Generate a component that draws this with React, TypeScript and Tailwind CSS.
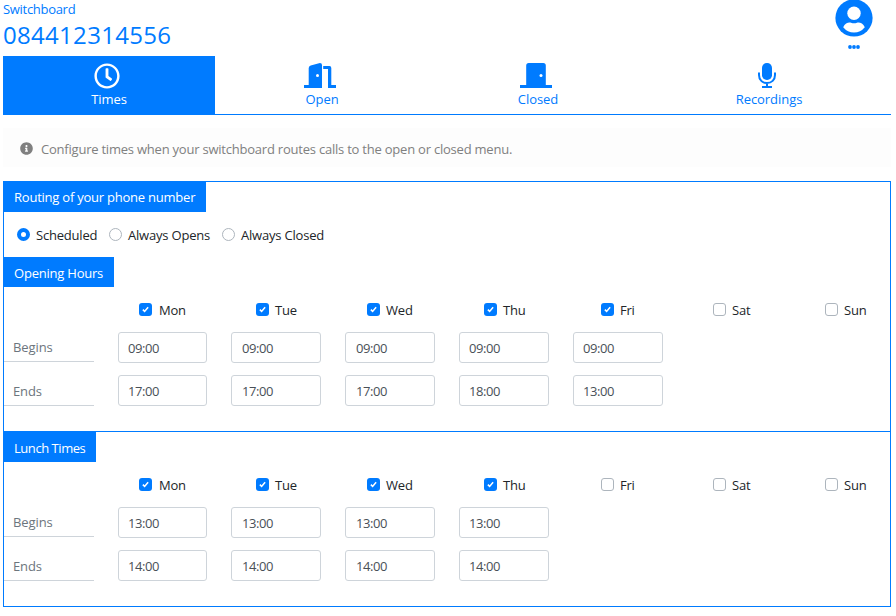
import type { ReactNode } from "react";
import { FaInfoCircle, FaRegClock } from "react-icons/fa";

function DoorOpenIcon() {
  return (
    <svg width="32" height="25" viewBox="0 0 32 25" fill="currentColor">
      <path d="M0 22h4.700V5Q4.700 3 6.700 2.400L15 .2Q18 -.3 18 2V25H0Z" />
      <path d="M19.200 3H25.500q1.800 0 1.800 2v17H32v3h-8V6h-4.800Z" />
      <circle cx="13.500" cy="12.500" r="1.500" fill="#fff" />
    </svg>
  );
}

function DoorClosedIcon() {
  return (
    <svg width="32" height="25" viewBox="0 0 32 25" fill="currentColor">
      <path d="M0 22h6.200V2.500Q6.200 0 8.700 0h14.600q2.500 0 2.500 2.500v19.500H32v3H0Z" />
      <circle cx="21" cy="12.500" r="1.500" fill="#fff" />
    </svg>
  );
}

function UserIcon() {
  return (
    <svg width="38" height="38" viewBox="0 0 38 38">
      <circle cx="19" cy="18" r="18.600" fill="#007bff" />
      <circle cx="19" cy="13.200" r="6.700" fill="#fff" />
      <path d="M8.200 27.200C10 23 14 22 16 22.800Q19 23.800 22 22.800C24 22 28 23 29.800 27.200Q25.500 32.500 19 32.500T8.200 27.200Z" fill="#fff" />
    </svg>
  );
}

function MicIcon() {
  return (
    <svg width="18" height="25" viewBox="0 0 18 25">
      <rect x="4" y="0" width="10" height="17" rx="4.800" fill="currentColor" />
      <path d="M1 9.500V12C1 17 4.500 20 9 20S17 17 17 12V9.500M9 20V24M4 24H14" fill="none" stroke="currentColor" strokeWidth="2" />
    </svg>
  );
}

function Tab({ width, icon, active, children }: { width: string; icon: ReactNode; active?: boolean; children: ReactNode }) {
  return (
    <button className={`${width} ${active ? "bg-[#007bff] text-white" : "text-[#007bff]"} flex h-[58px] flex-col items-center pt-[7px]`}>
      <span className="mr-1 flex h-[25px] items-center">{icon}</span>
      <span className="mt-[2px] leading-[18px] tracking-[-0.05px]">{children}</span>
    </button>
  );
}

function Heading({ className, children }: { className: string; children: ReactNode }) {
  return <h2 className={`${className} h-[30px] whitespace-nowrap bg-[#007bff] pl-[10px] text-white`}>{children}</h2>;
}

function Radio({ label, checked, width }: { label: string; checked?: boolean; width: string }) {
  return (
    <label className={`flex items-center ${width}`}>
      <span className={`-mt-px size-[13px] shrink-0 rounded-full ${checked ? "border-4 border-[#007bff]" : "border border-[#adb5bd]"}`} />
      <span className="ml-[6px] whitespace-nowrap leading-[18px] tracking-[-0.2px]">{label}</span>
    </label>
  );
}

const days = [
  { name: "Mon", col: "w-[113px]", pad: "pl-[33px]", gap: "ml-[7px]", input: "w-[89px] pl-[9px]" },
  { name: "Tue", col: "w-[114px]", pad: "pl-[37px]", gap: "ml-[6px]", input: "w-[90px] pl-[10px]" },
  { name: "Wed", col: "w-[114px]", pad: "pl-[34px]", gap: "ml-[6px]", input: "w-[90px] pl-[10px]" },
  { name: "Thu", col: "w-[114px]", pad: "pl-[37px]", gap: "ml-[6px]", input: "w-[90px] pl-[9px]" },
  { name: "Fri", col: "w-[114px]", pad: "pl-[40px]", gap: "ml-[6px]", input: "w-[90px] pl-[9px]" },
  { name: "Sat", col: "w-[114px]", pad: "pl-[38px]", gap: "ml-[6px]", input: "w-[90px] pl-[9px]" },
  { name: "Sun", col: "w-[100px]", pad: "pl-[36px]", gap: "ml-[6px]", input: "w-[90px] pl-[9px]" },
];

function TimeField({ className, value }: { className: string; value: string }) {
  return <div className={`${className} h-[31px] rounded-[3px] border border-[#ced4da] leading-[31px] tracking-[-0.4px]`}>{value}</div>;
}

function Schedule({ begins, ends }: { begins: string[]; ends: string[] }) {
  return (
    <div className="flex pt-[14px]">
      <div className="w-[102px] shrink-0 pt-[30px] tracking-[-0.1px] text-[#6c757d]">
        <div className="h-[31px] w-[90px] border-b border-[#ced4da] pl-[9px] leading-[32px]">Begins</div>
        <div className="mt-[13px] h-[31px] w-[90px] border-b border-[#ced4da] pl-[9px] leading-[32px]">Ends</div>
      </div>
      {days.map((d, i) => (
        <div key={d.name} className={`${d.col} shrink-0`}>
          <label className={`flex h-[18px] items-center ${d.pad}`}>
            <span className={`-mt-[2px] flex size-[13px] shrink-0 items-center justify-center rounded-[3px] ${begins[i] ? "bg-[#007bff]" : "border border-[#adb5bd]"}`}>
              {begins[i] && (
                <svg width="7" height="7" viewBox="0 0 8 8">
                  <path d="M1 4.200 3 6.200 7 1.500" fill="none" stroke="#fff" strokeWidth="1.800" />
                </svg>
              )}
            </span>
            <span className={`${d.gap} leading-[18px] tracking-[-0.2px]`}>{d.name}</span>
          </label>
          {begins[i] && (
            <div className="flex flex-col gap-3 pl-3 pt-[13px] text-[#495057]">
              <TimeField className={d.input} value={begins[i]} />
              <TimeField className={d.input} value={ends[i]} />
            </div>
          )}
        </div>
      ))}
    </div>
  );
}

export default function App() {
  return (
    <div className="h-[616px] w-[896px] overflow-hidden bg-white pl-[3px] font-['Open_Sans','Noto_Sans',sans-serif] text-[13px] text-[#212529]">
      <header className="flex h-[56px] justify-between pr-[23px] text-[#007bff]">
        <div>
          <div className="leading-[19px] tracking-[-0.3px]">Switchboard</div>
          <h1 className="text-[24px] font-medium leading-[32px] tracking-[0.3px]">084412314556</h1>
        </div>
        <div className="flex flex-col items-center">
          <UserIcon />
          <svg className="mt-[7px]" width="12" height="4" viewBox="0 0 12 4" fill="currentColor">
            <circle cx="2" cy="2" r="1.900" />
            <circle cx="6" cy="2" r="1.900" />
            <circle cx="10" cy="2" r="1.900" />
          </svg>
        </div>
      </header>
      <nav className="flex w-[888px] border-b border-[#007bff]">
        <Tab width="w-[212px]" active icon={<FaRegClock size={26} />}>Times</Tab>
        <Tab width="w-[214px]" icon={<DoorOpenIcon />}>Open</Tab>
        <Tab width="w-[218px]" icon={<DoorClosedIcon />}>Closed</Tab>
        <Tab width="w-[244px]" icon={<MicIcon />}>Recordings</Tab>
      </nav>
      <div className="mt-[13px] flex h-[39px] w-[888px] items-center bg-[#fdfdfd] pl-[17px] text-[#808080]">
        <FaInfoCircle size={13} className="mt-[2px]" />
        <span className="ml-2 mt-[3px] leading-[18px] tracking-[-0.22px]">Configure times when your switchboard routes calls to the open or closed menu.</span>
      </div>
      <main className="mt-[14px] h-[426px] w-[888px] border border-[#007bff]">
        <section className="h-[75px]">
          <Heading className="w-[202px] leading-[31px] tracking-[-0.23px]">Routing of your phone number</Heading>
          <div className="flex pl-[13px] pt-[14px]">
            <Radio label="Scheduled" checked width="w-[92px]" />
            <Radio label="Always Opens" width="w-[113px]" />
            <Radio label="Always Closed" width="w-[113px]" />
          </div>
        </section>
        <section className="h-[174px]">
          <Heading className="w-[110px] leading-[33px] tracking-[-0.22px]">Opening Hours</Heading>
          <Schedule begins={["09:00", "09:00", "09:00", "09:00", "09:00", "", ""]} ends={["17:00", "17:00", "17:00", "18:00", "13:00", "", ""]} />
        </section>
        <section className="h-[175px] border-t border-[#007bff]">
          <Heading className="w-[92px] leading-[33px] tracking-[-0.45px]">Lunch Times</Heading>
          <Schedule begins={["13:00", "13:00", "13:00", "13:00", "", "", ""]} ends={["14:00", "14:00", "14:00", "14:00", "", "", ""]} />
        </section>
      </main>
    </div>
  );
}
